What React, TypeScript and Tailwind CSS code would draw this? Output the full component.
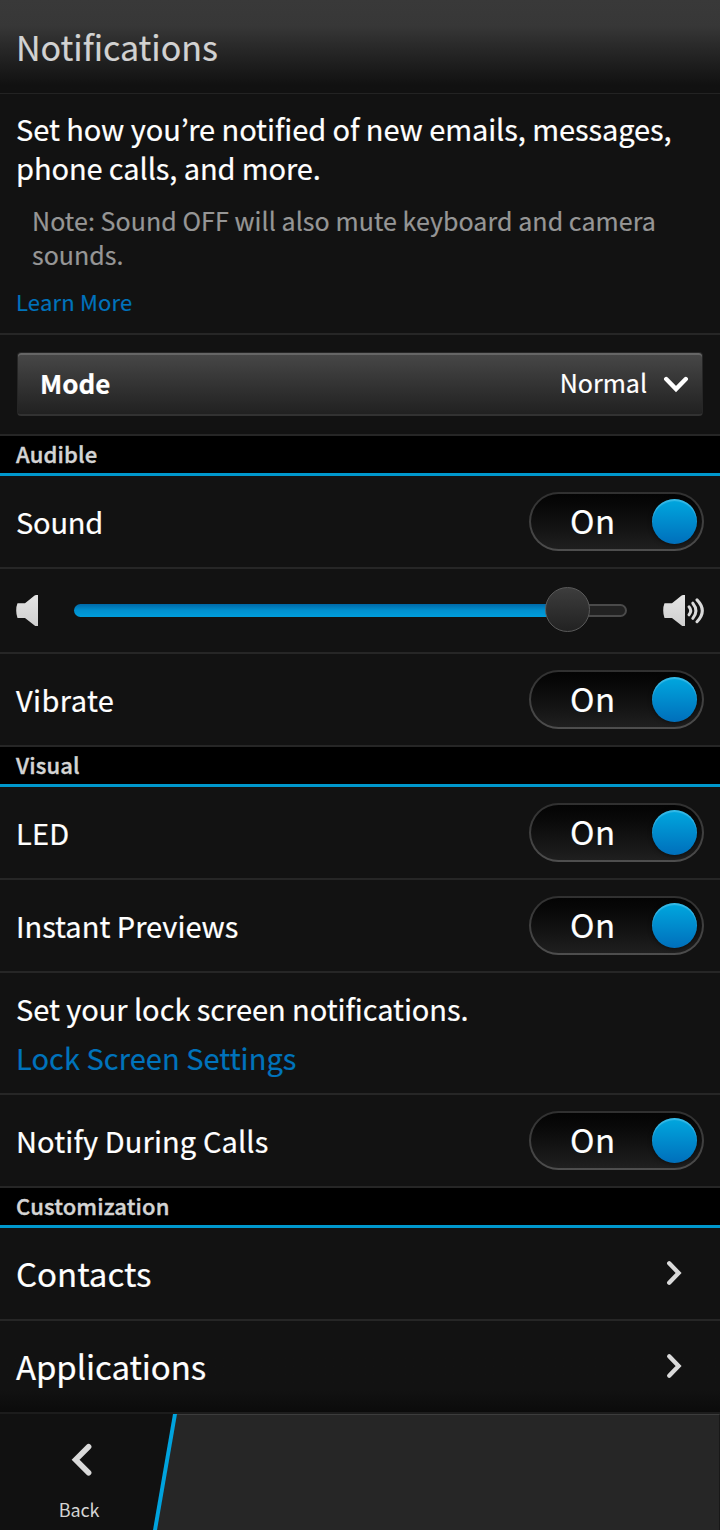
import type { ReactNode } from "react";

function Divider() {
  return <div className="h-0.5 bg-[#262626]" />;
}

function SectionHeader({ children }: { children: ReactNode }) {
  return (
    <h2 className="flex h-10 items-center border-b-[3px] border-[#0098cd] bg-black pl-4 text-[22px] font-medium tracking-[0.16px] text-[#d4d4d4] [-webkit-text-stroke:0.4px]">
      <span className="pb-[3px]">{children}</span>
    </h2>
  );
}

function Toggle() {
  return (
    <button
      role="switch"
      aria-checked="true"
      className="h-[59px] w-[175px] rounded-full bg-linear-to-b from-[#303030] to-[#4e4e4e] p-0.5"
    >
      <span className="flex h-full items-center justify-between rounded-full bg-linear-to-b from-[#040404] to-[#1f1f1f] pr-[5px] pl-[39px]">
        <span className="pb-0.5 text-[33px] leading-none tracking-[0.6px]">On</span>
        <span className="mb-px size-[45px] rounded-full bg-linear-to-b from-[#00a8df] to-[#006fbb] shadow-[inset_0_2px_1px_rgba(120,210,245,0.45),0_1px_4px_rgba(0,0,0,0.5)]" />
      </span>
    </button>
  );
}

function ToggleRow({ label, className = "" }: { label: string; className?: string }) {
  return (
    <div className="flex h-[91px] items-center justify-between px-4 text-[29px]">
      <span className={className}>{label}</span>
      <Toggle />
    </div>
  );
}

function LinkRow({ label, className = "" }: { label: string; className?: string }) {
  return (
    <div className="flex h-[91px] items-center justify-between pr-[38px] pl-4 text-[33px]">
      <span className={className}>{label}</span>
      <svg width="16" height="26" viewBox="0 0 16 26" fill="none" className="mb-px">
        <path d="M3.2 3.2 L12.6 13 L3.2 22.8" stroke="#dadada" strokeWidth="4.3" strokeLinecap="round" strokeLinejoin="miter" />
      </svg>
    </div>
  );
}

function Speaker({ waves = false }: { waves?: boolean }) {
  return (
    <svg width={waves ? 42 : 23} height="32" viewBox={waves ? "0 0 42 32" : "0 0 23 32"} fill="none" className="shrink-0">
      <defs>
        <linearGradient id="speaker" x1="0" y1="0" x2="0" y2="1">
          <stop offset="0" stopColor="#e4e4e4" />
          <stop offset="1" stopColor="#cfcfcf" />
        </linearGradient>
      </defs>
      <path d="M1.5 8.3 H9 L18.6 0.6 Q19.2 0.1 20 0.1 H22 V31 H20 Q19.2 31 18.6 30.5 L9 23 H1.5 Q0.2 19.8 0.2 15.6 Q0.2 11.3 1.5 8.3 Z" fill="url(#speaker)" />
      {waves && (
        <g stroke="#dadada" strokeWidth="3" strokeLinecap="round">
          <path d="M26 11.8 Q29.4 15.8 26 19.8" />
          <path d="M29.8 8.2 Q36 15.8 29.8 23.4" />
          <path d="M34 4.9 Q44.6 15.8 34 26.7" />
        </g>
      )}
    </svg>
  );
}

function VolumeSlider() {
  return (
    <div className="flex h-[83px] items-center pr-[15px] pl-4">
      <Speaker />
      <div className="mr-[36px] ml-[35px] flex flex-1 items-center">
        <div className="h-[13px] w-[475px] rounded-l-full bg-linear-to-b from-[#0069a8] via-[#0090cf] to-[#009ddb]" />
        <div className="z-10 -mx-1 mb-0.5 size-[45px] shrink-0 rounded-full border border-[#5a5a5a] bg-linear-to-b from-[#3d3d3d] to-[#222222]" />
        <div className="h-[13px] flex-1 rounded-r-full border-2 border-[#4a4a4a] bg-[#222222]" />
      </div>
      <Speaker waves />
    </div>
  );
}

export default function App() {
  return (
    <div className="flex h-[1530px] w-[720px] flex-col overflow-hidden bg-[#121212] font-['Noto_Sans_CJK_KR','Noto_Sans',sans-serif] text-white [-webkit-text-stroke:0.2px]">
      <header className="flex h-[94px] items-center border-b border-[#232323] bg-linear-to-b from-[#393939] from-0% via-[#373737] via-28% to-[#111111] to-92% pl-4">
        <h1 className="text-[34px] tracking-[-0.02px] text-[#d2d2d2]">Notifications</h1>
      </header>

      <section className="h-[239px] pt-[15px] whitespace-nowrap">
        <p className="pl-4 text-[29px] leading-[39px]">
          <span className="block tracking-[-0.07px]">Set how you’re notified of new emails, messages,</span>
          <span className="block tracking-[-0.09px]">phone calls, and more.</span>
        </p>
        <p className="mt-4 pl-8 text-[25px] leading-[34px] text-[#969696]">
          <span className="block tracking-[0.06px]">Note: Sound OFF will also mute keyboard and camera</span>
          <span className="block">sounds.</span>
        </p>
        <a className="mt-[15px] block pl-4 text-[22px] leading-[31px] tracking-[0.2px] text-[#0073bc]">Learn More</a>
      </section>
      <Divider />

      <section className="h-[99px] px-[17px] pt-[17px]">
        <button className="flex h-16 w-full items-center rounded-[4px] border border-[#262626] border-b-2 border-b-[#323232] bg-linear-to-b from-[#484848] to-[#212121] pr-[13px] pb-px pl-[22px] text-[25px] shadow-[inset_0_2px_0_#666666]">
          <span className="pb-px text-[26px] font-bold">Mode</span>
          <span className="ml-auto pb-px">Normal</span>
          <svg width="26" height="17" viewBox="0 0 26 17" fill="none" className="mt-0.5 ml-4">
            <path d="M3.2 3 L13 13 L22.8 3" stroke="#ffffff" strokeWidth="4.4" strokeLinecap="round" />
          </svg>
        </button>
      </section>
      <Divider />

      <SectionHeader>Audible</SectionHeader>
      <ToggleRow label="Sound" className="tracking-[-0.2px]" />
      <Divider />
      <VolumeSlider />
      <Divider />
      <ToggleRow label="Vibrate" className="tracking-[0.4px]" />
      <Divider />

      <SectionHeader>Visual</SectionHeader>
      <ToggleRow label="LED" className="tracking-[0.2px]" />
      <Divider />
      <ToggleRow label="Instant Previews" />
      <Divider />
      <section className="h-[120px] pt-4 pl-4 text-[29px] leading-[39px]">
        <p className="tracking-[-0.05px]">Set your lock screen notifications.</p>
        <a className="mt-2.5 block tracking-[0.05px] text-[#0073bc]">Lock Screen Settings</a>
      </section>
      <Divider />
      <ToggleRow label="Notify During Calls" className="tracking-[0.12px]" />
      <Divider />

      <SectionHeader>Customization</SectionHeader>
      <LinkRow label="Contacts" />
      <Divider />
      <div className="bg-linear-to-b from-[#121212] from-75% to-[#0b0b0b]">
        <LinkRow label="Applications" className="tracking-[-0.08px]" />
      </div>
      <div className="h-0.5 bg-[#1c1c1c]" />

      <footer className="flex h-[116px] bg-[#111111]">
        <button className="flex w-[153px] flex-col items-center pt-[29px] pl-[7px]">
          <svg width="22" height="34" viewBox="0 0 22 34" fill="none" className="ml-[3px]">
            <path d="M17.6 3.8 L4.6 16.8 L17.6 29.8" stroke="#dadada" strokeWidth="5.6" strokeLinecap="round" />
          </svg>
          <span className="mt-[19px] mr-0.5 text-[18px] leading-[26px] tracking-[-0.1px] text-[#d4d4d4] [-webkit-text-stroke:0]">Back</span>
        </button>
        <svg width="24" height="116" viewBox="0 0 24 116">
          <path d="M24 0 V116 H2 L22 0 Z" fill="#262626" />
          <path d="M22 0 H24 V1 H22 Z" fill="#3c3c3c" />
          <path d="M20 0 H24 L4 116 H0 Z" fill="#00a3de" />
        </svg>
        <div className="flex-1 border-t border-r border-t-[#3c3c3c] border-r-[#181818] bg-[#262626]" />
      </footer>
    </div>
  );
}
